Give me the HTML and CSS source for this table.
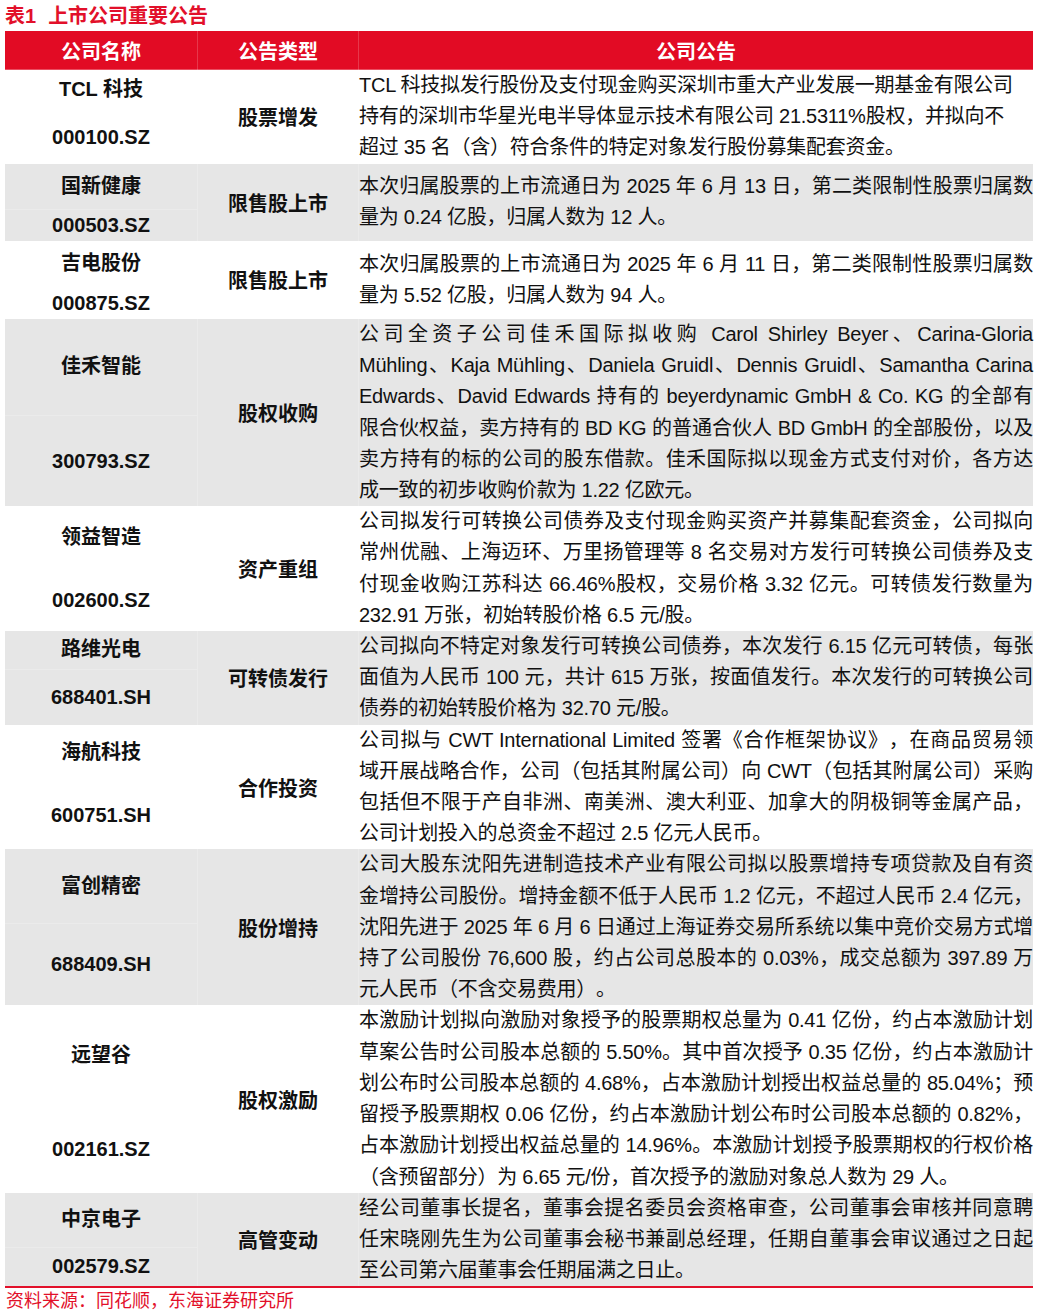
FILE: index.html
```html
<!DOCTYPE html>
<html lang="zh-CN">
<head>
<meta charset="utf-8">
<title>上市公司重要公告</title>
<link rel="stylesheet" href="styles.css">
</head>
<body>
<div class="page">
  <h1 class="title"><span>表1</span><span>上市公司重要公告</span></h1>
  <div class="table">
    <div class="thead">
      <div class="th">公司名称</div>
      <div class="th">公告类型</div>
      <div class="th">公司公告</div>
    </div>

    <div class="row">
      <div class="name split-40"><div>TCL 科技</div><div>000100.SZ</div></div>
      <div class="type">股票增发</div>
      <div class="content left">
        <div class="ln">TCL 科技拟发行股份及支付现金购买深圳市重大产业发展一期基金有限公司</div>
        <div class="ln">持有的深圳市华星光电半导体显示技术有限公司 21.5311%股权，并拟向不</div>
        <div class="ln">超过 35 名（含）符合条件的特定对象发行股份募集配套资金。</div>
      </div>
    </div>

    <div class="row shade">
      <div class="name split-45"><div>国新健康</div><div>000503.SZ</div></div>
      <div class="type">限售股上市</div>
      <div class="content">
        <div class="ln">本次归属股票的上市流通日为 2025 年 6 月 13 日，第二类限制性股票归属数</div>
        <div class="ln end">量为 0.24 亿股，归属人数为 12 人。</div>
      </div>
    </div>

    <div class="row">
      <div class="name split-46"><div>吉电股份</div><div>000875.SZ</div></div>
      <div class="type">限售股上市</div>
      <div class="content">
        <div class="ln">本次归属股票的上市流通日为 2025 年 6 月 11 日，第二类限制性股票归属数</div>
        <div class="ln end">量为 5.52 亿股，归属人数为 94 人。</div>
      </div>
    </div>

    <div class="row shade">
      <div class="name split-96"><div>佳禾智能</div><div>300793.SZ</div></div>
      <div class="type">股权收购</div>
      <div class="content">
        <div class="ln">公司全资子公司佳禾国际拟收购 Carol Shirley Beyer、Carina-Gloria</div>
        <div class="ln">Mühling、Kaja Mühling、Daniela Gruidl、Dennis Gruidl、Samantha Carina</div>
        <div class="ln">Edwards、David Edwards 持有的 beyerdynamic GmbH &amp; Co. KG 的全部有</div>
        <div class="ln">限合伙权益，卖方持有的 BD KG 的普通合伙人 BD GmbH 的全部股份，以及</div>
        <div class="ln">卖方持有的标的公司的股东借款。佳禾国际拟以现金方式支付对价，各方达</div>
        <div class="ln end">成一致的初步收购价款为 1.22 亿欧元。</div>
      </div>
    </div>

    <div class="row">
      <div class="name split-62"><div>领益智造</div><div>002600.SZ</div></div>
      <div class="type">资产重组</div>
      <div class="content">
        <div class="ln">公司拟发行可转换公司债券及支付现金购买资产并募集配套资金，公司拟向</div>
        <div class="ln">常州优融、上海迈环、万里扬管理等 8 名交易对方发行可转换公司债券及支</div>
        <div class="ln">付现金收购江苏科达 66.46%股权，交易价格 3.32 亿元。可转债发行数量为</div>
        <div class="ln end">232.91 万张，初始转股价格 6.5 元/股。</div>
      </div>
    </div>

    <div class="row shade">
      <div class="name split-38"><div>路维光电</div><div>688401.SH</div></div>
      <div class="type">可转债发行</div>
      <div class="content">
        <div class="ln">公司拟向不特定对象发行可转换公司债券，本次发行 6.15 亿元可转债，每张</div>
        <div class="ln">面值为人民币 100 元，共计 615 万张，按面值发行。本次发行的可转换公司</div>
        <div class="ln end">债券的初始转股价格为 32.70 元/股。</div>
      </div>
    </div>

    <div class="row">
      <div class="name split-56"><div>海航科技</div><div>600751.SH</div></div>
      <div class="type">合作投资</div>
      <div class="content">
        <div class="ln">公司拟与 CWT International Limited 签署《合作框架协议》，在商品贸易领</div>
        <div class="ln">域开展战略合作，公司（包括其附属公司）向 CWT（包括其附属公司）采购</div>
        <div class="ln">包括但不限于产自非洲、南美洲、澳大利亚、加拿大的阴极铜等金属产品，</div>
        <div class="ln end">公司计划投入的总资金不超过 2.5 亿元人民币。</div>
      </div>
    </div>

    <div class="row shade">
      <div class="name split-74"><div>富创精密</div><div>688409.SH</div></div>
      <div class="type">股份增持</div>
      <div class="content">
        <div class="ln">公司大股东沈阳先进制造技术产业有限公司拟以股票增持专项贷款及自有资</div>
        <div class="ln">金增持公司股份。增持金额不低于人民币 1.2 亿元，不超过人民币 2.4 亿元，</div>
        <div class="ln">沈阳先进于 2025 年 6 月 6 日通过上海证券交易所系统以集中竞价交易方式增</div>
        <div class="ln">持了公司股份 76,600 股，约占公司总股本的 0.03%，成交总额为 397.89 万</div>
        <div class="ln end">元人民币（不含交易费用）。</div>
      </div>
    </div>

    <div class="row">
      <div class="name split-100"><div>远望谷</div><div>002161.SZ</div></div>
      <div class="type">股权激励</div>
      <div class="content">
        <div class="ln">本激励计划拟向激励对象授予的股票期权总量为 0.41 亿份，约占本激励计划</div>
        <div class="ln">草案公告时公司股本总额的 5.50%。其中首次授予 0.35 亿份，约占本激励计</div>
        <div class="ln">划公布时公司股本总额的 4.68%，占本激励计划授出权益总量的 85.04%；预</div>
        <div class="ln">留授予股票期权 0.06 亿份，约占本激励计划公布时公司股本总额的 0.82%，</div>
        <div class="ln">占本激励计划授出权益总量的 14.96%。本激励计划授予股票期权的行权价格</div>
        <div class="ln end">（含预留部分）为 6.65 元/份，首次授予的激励对象总人数为 29 人。</div>
      </div>
    </div>

    <div class="row shade">
      <div class="name split-54"><div>中京电子</div><div>002579.SZ</div></div>
      <div class="type">高管变动</div>
      <div class="content">
        <div class="ln">经公司董事长提名，董事会提名委员会资格审查，公司董事会审核并同意聘</div>
        <div class="ln">任宋晓刚先生为公司董事会秘书兼副总经理，任期自董事会审议通过之日起</div>
        <div class="ln end">至公司第六届董事会任期届满之日止。</div>
      </div>
    </div>
  </div>
  <p class="source">资料来源：同花顺，东海证券研究所</p>
</div>
</body>
</html>
```

FILE: styles.css
```css
html, body {
  margin: 0;
  background: #ffffff;
}

body {
  font-family: "Liberation Sans", "Noto Sans CJK SC", sans-serif;
  color: #111111;
  text-spacing-trim: space-all;
}

.page {
  width: 1028px;
  padding-left: 5px;
}

.title {
  margin: 0;
  height: 31px;
  line-height: 32px;
  font-size: 20px;
  font-weight: 700;
  color: #e2102a;
  display: flex;
  gap: 12px;
}

.table {
  border-bottom: 2px solid #e2102a;
}

.thead {
  display: grid;
  grid-template-columns: 192px 161px 1fr;
  height: 39px;
  background: #e20b24;
  box-shadow: inset 0 -1px 0 rgba(255, 255, 255, 0.28);
  color: #ffffff;
  font-size: 20px;
  font-weight: 700;
}

.th {
  display: flex;
  align-items: center;
  justify-content: center;
}

.th + .th {
  border-left: 1px solid rgba(255, 255, 255, 0.18);
}

.row {
  display: grid;
  grid-template-columns: 192px 161px 1fr;
  background: #ffffff;
}

.row.shade {
  background: #e6e6e6;
}

.name {
  display: grid;
  grid-template-rows: var(--top) 1fr;
  font-size: 20px;
  font-weight: 700;
  line-height: 31.2px;
}

.name > div {
  display: flex;
  align-items: center;
  justify-content: center;
}

.name > div + div {
  border-top: 1px solid rgba(255, 255, 255, 0.22);
}

.split-38 { --top: 38px; }
.split-40 { --top: 40px; }
.split-45 { --top: 45px; }
.split-46 { --top: 46px; }
.split-54 { --top: 54px; }
.split-56 { --top: 56px; }
.split-62 { --top: 62px; }
.split-74 { --top: 74px; }
.split-96 { --top: 96px; }
.split-100 { --top: 100px; }

.type {
  display: flex;
  align-items: center;
  justify-content: center;
  font-size: 20px;
  font-weight: 700;
  border-left: 1px solid rgba(255, 255, 255, 0.22);
}

.content {
  display: flex;
  flex-direction: column;
  justify-content: center;
  font-size: 20px;
  line-height: 31.2px;
  letter-spacing: -0.25px;
  border-left: 1px solid rgba(255, 255, 255, 0.22);
  min-width: 0;
}

.ln {
  white-space: nowrap;
  text-align: left;
  text-align-last: justify;
}

.ln.end,
.content.left .ln {
  text-align-last: left;
}

.source {
  margin: 0;
  font-size: 18px;
  line-height: 26px;
  color: #e2102a;
  padding-left: 1px;
}
```
